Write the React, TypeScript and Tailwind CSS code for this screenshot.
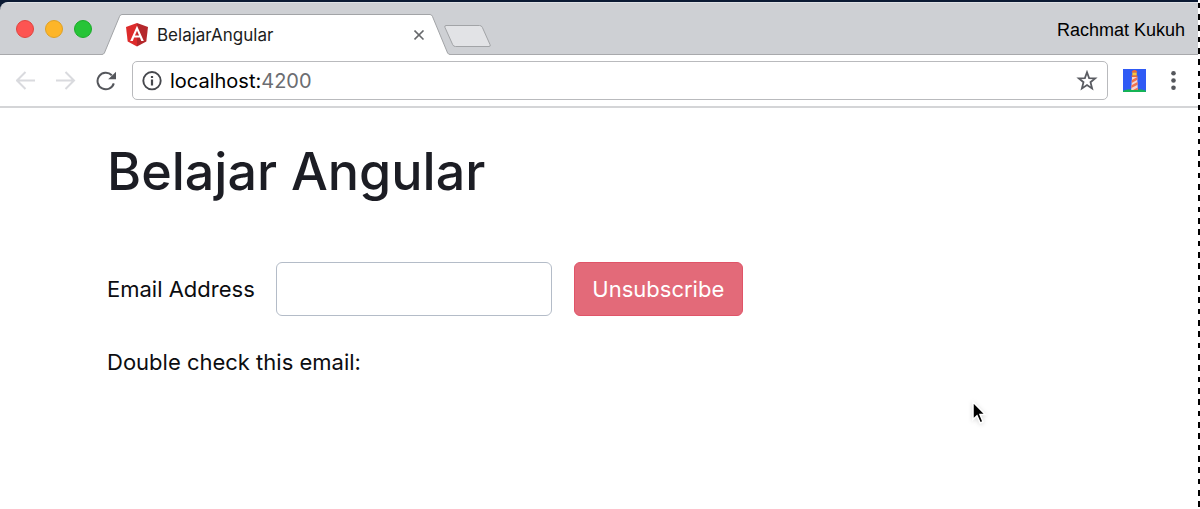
import { useState } from "react";

function AngularLogo() {
  return (
    <svg width="22" height="24" viewBox="0 0 22 24" aria-hidden="true">
      <path d="M11 0 0 3.9 1.7 18.5 11 23.6Z" fill="#dd2b2b" />
      <path d="M11 0 22 3.9 20.3 18.5 11 23.6Z" fill="#b5272b" />
      <path
        d="M11 2.8 4.2 18h2.6l1.3-3.4h5.8l1.3 3.4h2.6Zm0 4.9 2.1 4.9H8.9Z"
        fill="#fff"
      />
    </svg>
  );
}

function ArrowIcon({ flipped = false }: { flipped?: boolean }) {
  return (
    <svg
      width="20"
      height="20"
      viewBox="0 0 20 20"
      fill="none"
      stroke="#d9dade"
      strokeWidth="2"
      aria-hidden="true"
    >
      <path
        d={flipped ? "M0 9.5H17.5M9.5 1 18 9.5 9.5 18" : "M19 9.5H1.5M9.5 1 1 9.5 9.5 18"}
      />
    </svg>
  );
}

function ReloadIcon() {
  return (
    <svg width="20" height="20" viewBox="0 0 20 20" aria-hidden="true">
      <path
        d="M17.8 12.4A8.3 8.3 0 1 1 15.8 4.2"
        fill="none"
        stroke="#55575c"
        strokeWidth="2"
      />
      <path d="M20 .8V8.2H12.2Z" fill="#55575c" />
    </svg>
  );
}

function InfoIcon() {
  return (
    <svg width="20" height="20" viewBox="0 0 20 20" aria-hidden="true">
      <circle cx="10" cy="9.7" r="8.7" fill="none" stroke="#46484d" strokeWidth="1.9" />
      <path d="M8.9 5h2.2v2.1H8.9ZM8.9 8.6h2.2v6H8.9Z" fill="#46484d" />
    </svg>
  );
}

function StarIcon() {
  return (
    <svg width="22" height="22" viewBox="0 0 22 22" aria-hidden="true">
      <path
        d="m11 2.3 2.1 5.8 6.1.3-4.7 3.8 1.6 6.3L11 15l-5.1 3.5 1.6-6.3-4.7-3.8 6.1-.3Z"
        fill="none"
        stroke="#5a5c62"
        strokeWidth="1.8"
      />
    </svg>
  );
}

function LighthouseIcon() {
  return (
    <svg width="23" height="23" viewBox="0 0 23 23" aria-hidden="true">
      <path d="M0 0h23v23H0Z" fill="#2f5af5" />
      <path d="M0 23v-1.2q4-1.8 11.5-1.8T23 21.8V23Z" fill="#15b455" />
      <path d="M9 7.5h5.2L14.8 21H8.2Z" fill="#f3d6d3" />
      <path
        d="m8.9 11 5.3-2.9.2 2.7-5.7 3.2ZM8.5 16.2l6-3.3.2 2.8-6.4 3.4ZM10 21l4.8-2.6V21Z"
        fill="#f0714f"
      />
      <path d="M9.3 3.3h4.4v3.4H9.3Z" fill="#f9c63a" />
      <path d="M8.8 3.6q0-2.5 2.7-2.5t2.7 2.5ZM8.6 6.6h5.8v1.5H8.6Z" fill="#ee6a35" />
    </svg>
  );
}

function Tab({ title }: { title: string }) {
  return (
    <div className="-mb-px ml-[10px] flex h-[41px] w-[348px]">
      <svg width="20" height="41" viewBox="0 0 20 41" aria-hidden="true">
        <path d="M0 41V40.5Q1.8 40.2 2.4 39L17.6 2.3Q18.4.5 20 .5V41Z" fill="#fff" />
        <path
          d="M0 40.5Q1.8 40.2 2.4 39L17.6 2.3Q18.4.5 20 .5"
          fill="none"
          stroke="#a2a4a7"
        />
      </svg>
      <div className="flex min-w-0 flex-1 items-center border-t border-[#a2a4a7] bg-white pr-1 pl-1">
        <AngularLogo />
        <span className="ml-[9px] flex-1 truncate text-[17px] leading-6 text-[#1c1d20]">
          {title}
        </span>
        <button type="button" aria-label="Close tab" className="p-px">
          <svg width="11" height="11" viewBox="0 0 11 11" aria-hidden="true">
            <path d="m.5.5 9 9M9.5.5l-9 9" stroke="#66686b" strokeWidth="1.6" />
          </svg>
        </button>
      </div>
      <svg width="20" height="41" viewBox="0 0 20 41" aria-hidden="true">
        <path d="M20 41V40.5Q18.2 40.2 17.6 39L2.4 2.3Q1.6.5 0 .5V41Z" fill="#fff" />
        <path
          d="M20 40.5Q18.2 40.2 17.6 39L2.4 2.3Q1.6.5 0 .5"
          fill="none"
          stroke="#a2a4a7"
        />
      </svg>
    </div>
  );
}

function BrowserChrome() {
  return (
    <header>
      <div className="bg-[#0b1a33] pt-[2px]">
        <div className="flex h-[53px] items-end rounded-tl-lg border-t border-b border-t-[#dfe1e4] border-b-[#a8a9ac] bg-[#ced0d4] pl-4">
          <div className="flex gap-[11px] self-center">
            <span className="size-[18px] rounded-full border border-[#e0443e] bg-[#fd5452]" />
            <span className="size-[18px] rounded-full border border-[#dfa023] bg-[#fdb528]" />
            <span className="size-[18px] rounded-full border border-[#1aab29] bg-[#26c437]" />
          </div>
          <Tab title="BelajarAngular" />
          <button type="button" aria-label="New tab" className="-ml-[7px] mb-[6px]">
            <svg width="49" height="24" viewBox="0 0 49 24" aria-hidden="true">
              <path
                d="M3 1.5H36.5Q38.5 1.5 39.3 3.3L47 20.5Q48 22.5 46 22.5H12.5Q10.5 22.5 9.7 20.7L2 3.5Q1.2 1.5 3 1.5Z"
                fill="#e2e3e6"
                stroke="#a2a4a7"
              />
            </svg>
          </button>
          <span className="mr-[15px] ml-auto self-center pt-[2px] font-['Liberation_Sans',sans-serif] text-lg text-black">
            Rachmat Kukuh
          </span>
        </div>
      </div>

      <div className="flex h-[53px] items-center border-b-2 border-[#d4d5d7] pr-6 pl-4">
        <div className="flex gap-5">
          <button type="button" aria-label="Back">
            <ArrowIcon />
          </button>
          <button type="button" aria-label="Forward">
            <ArrowIcon flipped />
          </button>
          <button type="button" aria-label="Reload">
            <ReloadIcon />
          </button>
        </div>
        <div className="ml-4 flex h-[39px] flex-1 items-center rounded-[5px] border border-[#b9babd] px-[9px]">
          <InfoIcon />
          <div className="ml-2 flex-1 text-xl text-black">
            localhost:<span className="text-[#6b6d71]">4200</span>
          </div>
          <button type="button" aria-label="Bookmark this page">
            <StarIcon />
          </button>
        </div>
        <button type="button" aria-label="Lighthouse" className="ml-[15px]">
          <LighthouseIcon />
        </button>
        <button type="button" aria-label="Menu" className="ml-[25px]">
          <svg width="5" height="19" viewBox="0 0 5 19" fill="#55575c" aria-hidden="true">
            <circle cx="2.5" cy="2.3" r="2.3" />
            <circle cx="2.5" cy="9.5" r="2.3" />
            <circle cx="2.5" cy="16.7" r="2.3" />
          </svg>
        </button>
      </div>
    </header>
  );
}

export default function App() {
  const [email, setEmail] = useState("");

  return (
    <div className="relative min-h-screen bg-white font-['Inter',sans-serif]">
      <BrowserChrome />

      <main className="px-[107px] pt-8 text-[22px] leading-8 text-[#0c0d10]">
        <h1 className="text-[52px] leading-[64px] font-medium text-[#1c1d24]">
          Belajar Angular
        </h1>

        <form
          className="mt-[58px] flex items-center"
          onSubmit={(e) => e.preventDefault()}
        >
          <label htmlFor="email">Email Address</label>
          <input
            id="email"
            type="email"
            value={email}
            onChange={(e) => setEmail(e.target.value)}
            className="ml-[21px] h-[54px] w-[276px] rounded-md border border-[#b4bcc8] px-3 outline-none"
          />
          <button
            type="submit"
            className="ml-[22px] h-[54px] w-[169px] rounded-md border border-[#e05468] bg-[#e36a79] text-white"
          >
            Unsubscribe
          </button>
        </form>

        <p className="mt-[30px]">Double check this email: {email}</p>
      </main>

      {/* mouse pointer */}
      <svg
        className="pointer-events-none absolute top-[400px] left-[971px] drop-shadow-sm"
        width="17"
        height="26"
        viewBox="0 0 17 26"
        aria-hidden="true"
      >
        <path
          d="M2 2V19.5L6 15.7 9.2 23 12 21.8 9 14.6H14.3Z"
          fill="#000"
          stroke="#fff"
          strokeWidth="1.5"
        />
      </svg>

      {/* selection marquee along the right edge */}
      <div className="pointer-events-none absolute inset-y-0 right-0 w-[2px] bg-[repeating-linear-gradient(#fff_0_3px,#000_3px_8px,#fff_8px_14px,#000_14px_20px,#fff_20px_25px,#000_25px_31px,#fff_31px_34px)]" />
    </div>
  );
}
